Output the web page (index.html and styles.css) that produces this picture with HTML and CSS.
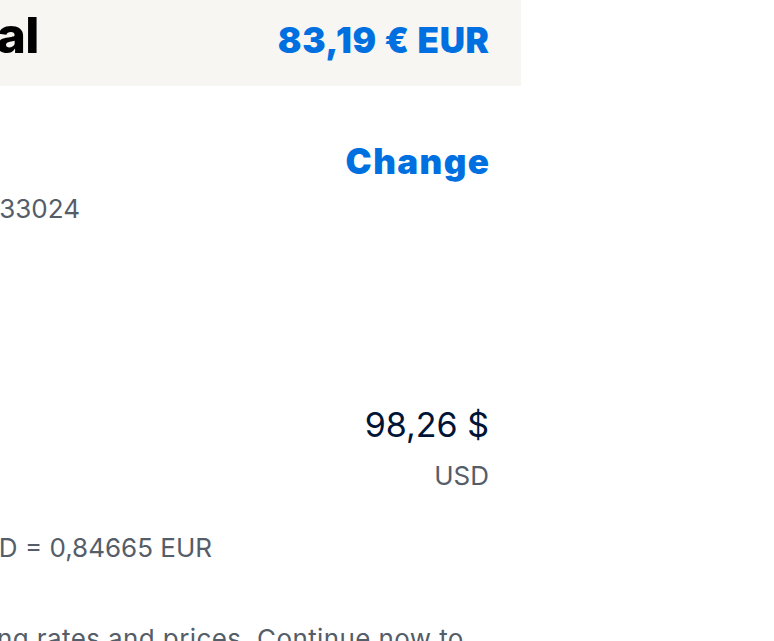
FILE: index.html
```html
<!DOCTYPE html>
<html lang="en">
<head>
<meta charset="utf-8">
<title>Checkout</title>
<link rel="stylesheet" href="styles.css">
</head>
<body>
<div class="page">
  <header class="total-bar">
    <div class="anchor anchor-total"><span class="total-label">Total</span></div>
    <div class="total-amount">83,19 € EUR</div>
  </header>
  <section class="ship">
    <div class="row-right"><a class="change" href="#">Change</a></div>
    <div class="anchor anchor-addr"><span class="muted">33024</span></div>
  </section>
  <section class="pay">
    <div class="row-right"><span class="amount">98,26 $</span></div>
    <div class="row-right"><span class="muted">USD</span></div>
    <div class="anchor anchor-rate"><span class="muted">1 USD = 0,84665 EUR</span></div>
    <p class="note">ng rates and prices. Continue now to</p>
  </section>
</div>
</body>
</html>
```
FILE: styles.css
```css
html, body {
  margin: 0;
  padding: 0;
  background: #ffffff;
  overflow: hidden;
  height: 641px;
}
body {
  font-family: Inter, "Liberation Sans", sans-serif;
  color: #001435;
}
.page {
  width: 521px;
  display: flex;
  flex-direction: column;
}
.total-bar {
  box-sizing: border-box;
  height: 86px;
  background: #f8f6f3;
  display: flex;
  align-items: baseline;
  justify-content: space-between;
  padding: 10px 32px 0 0;
}
.anchor {
  display: flex;
  justify-content: flex-end;
  white-space: nowrap;
}
.anchor-total { width: 39px; }
.total-label {
  font-size: 50px;
  line-height: 50px;
  font-weight: 800;
  color: #000000;
  letter-spacing: -0.5px;
}
.total-amount {
  font-size: 35px;
  line-height: 40px;
  font-weight: 900;
  color: #0070e0;
  letter-spacing: 0.7px;
  margin-right: -0.7px;
}
.row-right {
  display: flex;
  justify-content: flex-end;
  padding-right: 32px;
}
.ship {
  display: flex;
  flex-direction: column;
  margin-top: 55px;
  gap: 12px;
}
.change {
  font-size: 35px;
  line-height: 40px;
  font-weight: 900;
  color: #0070e0;
  text-decoration: none;
  letter-spacing: 1.4px;
  margin-right: -1.4px;
}
.muted {
  font-size: 26px;
  line-height: 32px;
  color: #545d68;
}
.anchor-addr { width: 80px; }
.pay {
  display: flex;
  flex-direction: column;
  margin-top: 180px;
}
.amount {
  font-size: 34px;
  line-height: 40px;
  color: #001435;
}
.pay .row-right + .row-right { margin-top: 15px; }
.anchor-rate { width: 212px; margin-top: 40px; }
.note {
  margin: 59px 0 0 -3px;
  font-size: 26px;
  line-height: 32px;
  color: #545d68;
  white-space: nowrap;
  letter-spacing: 0.4px;
}
```
